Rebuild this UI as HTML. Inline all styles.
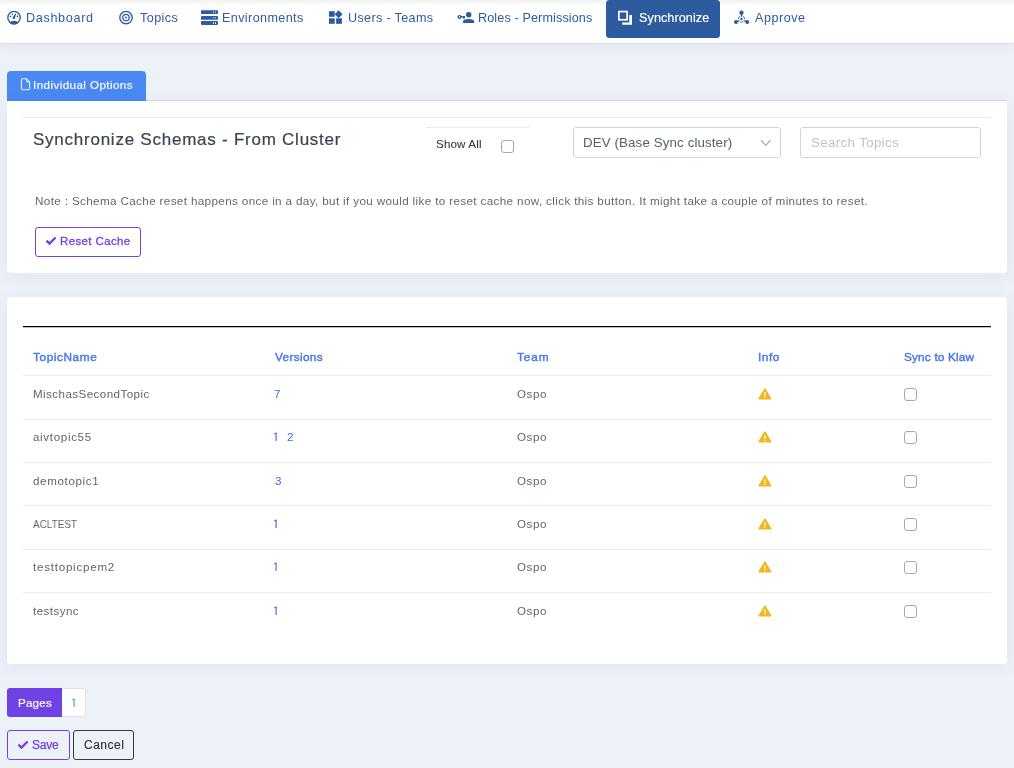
<!DOCTYPE html>
<html><head><meta charset="utf-8">
<style>
*{box-sizing:border-box;margin:0;padding:0}
html,body{width:1014px;height:768px;overflow:hidden}
body{background:#edf1f8;font-family:"Liberation Sans",sans-serif;position:relative}
.t{position:absolute;white-space:nowrap;line-height:1;font-family:"Liberation Sans",sans-serif;will-change:transform}
.abs{position:absolute}
.nav{position:absolute;left:0;top:0;width:1014px;height:43px;background:#fff;box-shadow:0 1px 2px rgba(90,100,110,.08),0 4px 14px rgba(90,100,110,.08)}
.topfade{position:absolute;left:0;top:0;width:1014px;height:6px;background:linear-gradient(#f1f1f1,#fff)}
.active{position:absolute;left:606px;top:-0.5px;width:114px;height:38px;background:#2c5b9e;border-radius:3.5px}
.tabb{position:absolute;left:7px;top:71px;width:139px;height:30px;background:#4a89f3;border-radius:4px 4px 0 0}
.card{position:absolute;background:#fff;border-radius:4px;box-shadow:0 3px 18px rgba(60,80,120,.075)}
.hl{position:absolute;height:1px;background:#ecebec}
.inp{position:absolute;border:1px solid #d4d4d4;border-radius:3px;background:#fff}
.cb{position:absolute;width:13px;height:13px;border:1px solid #a0a9b4;border-radius:3px;background:#fff}
.btn{position:absolute;border-radius:3px}
</style></head><body>
<div class="nav"></div>
<div class="topfade"></div>
<div class="active"></div>
<!-- nav icons -->
<svg class="abs" style="left:0;top:0" width="1014" height="43" viewBox="0 0 1014 43">
 <g fill="none" stroke="#2d5c9e">
  <!-- dashboard gauge -->
  <circle cx="14" cy="17.6" r="6.2" stroke-width="1.4"/>
  <!-- bullseye -->
  <circle cx="126" cy="17.6" r="6.2" stroke-width="1.4"/>
  <circle cx="126" cy="17.6" r="3.2" stroke-width="1.3"/>
 </g>
 <g fill="#2d5c9e">
  <circle cx="126" cy="17.6" r="1"/>
  <path d="M9.2 22.4 Q14 19.2 18.8 22.4 L17 24 Q14 25 11 24Z"/>
  <circle cx="10.5" cy="16.3" r="0.85"/><circle cx="17.4" cy="16.3" r="0.85"/><circle cx="12.4" cy="14.2" r="0.8"/>
  <circle cx="13.9" cy="17.7" r="1.25"/>
  <path d="M15.2 13.6 L16.1 14.1 L14.9 18 L12.8 17.4Z"/>
  <!-- server -->
  <rect x="201" y="10.2" width="17" height="3.9" rx="0.9"/>
  <rect x="201" y="15.9" width="17" height="3.9" rx="0.9"/>
  <rect x="201" y="21" width="17" height="3.9" rx="0.9"/>
  <!-- widgets -->
  <rect x="329" y="11.2" width="5.7" height="5.6"/>
  <rect x="329" y="18.3" width="5.7" height="5.5"/>
  <rect x="336.1" y="18.3" width="5.8" height="5.5"/>
  <path d="M338.6 10.3 L342.6 14.3 L338.6 18.3 L334.6 14.3Z"/>
  <!-- key user -->
  <circle cx="468.7" cy="14.8" r="2.7"/>
  <path d="M463 23 L463 21.5 Q463 19 468.6 19 Q474.2 19 474.2 21.5 L474.2 23Z"/>
  <path d="M459.5 14.9 a2.05 2.05 0 1 0 0.01 0Z M459.5 16 a0.5 0.9 0 1 1 -0.01 0Z" fill-rule="evenodd"/>
  <rect x="461" y="16.1" width="3.9" height="1.4"/>
  <path d="M463.2 16.1 L464.9 16.1 L464.9 18.3 L463.9 19 L463.2 18.5Z"/>
  <!-- hub -->
  <circle cx="741.5" cy="12.65" r="2.15"/>
  <path d="M740.5 14 L742.5 14 L741.8 16.9 L741.2 16.9Z"/>
  <circle cx="736" cy="22.1" r="2"/>
  <circle cx="747.2" cy="22.1" r="2"/>
  <circle cx="741.5" cy="19" r="1.2"/>
 </g>
 <g fill="#fff">
  <circle cx="213.4" cy="12.1" r="0.6"/><circle cx="215.5" cy="12.1" r="0.6"/>
  <circle cx="213.4" cy="17.8" r="0.6"/><circle cx="215.5" cy="17.8" r="0.6"/>
  <rect x="212.9" y="22.3" width="1" height="1.6"/><rect x="215" y="22.3" width="1" height="1.6"/>
 </g>
 <g stroke="#2d5c9e" stroke-width="1.1" fill="none">
  <path d="M739.4 20.4 L736.5 21.8 M743.6 20.4 L746.5 21.8"/>
  <circle cx="741.5" cy="19" r="3.1" stroke-width="0.9" pathLength="360" stroke-dasharray="68 52" stroke-dashoffset="64"/>
 </g>
 <!-- clone -->
 <g fill="none" stroke="#fff" stroke-width="1.7">
  <rect x="618.85" y="11.55" width="8.3" height="8.2"/>
 </g>
 <path d="M629.3 15 L632 15 L632 24.75 L622.2 24.75 L622.2 22.4 L629.3 22.4Z" fill="#fff"/>
</svg>
<div class="tabb"></div>
<svg class="abs" style="left:20px;top:77px" width="12" height="14" viewBox="0 0 12 14">
 <path d="M2.6 1.7 L6.6 1.7 L9.6 4.8 L9.6 11.9 Q9.6 12.7 8.8 12.7 L2.2 12.7 Q1.4 12.7 1.4 11.9 L1.4 2.5 Q1.4 1.7 2.2 1.7Z M6.6 1.7 L6.6 4.8 L9.6 4.8" fill="none" stroke="#fff" stroke-width="0.95" stroke-linejoin="round"/>
</svg>
<div class="card" style="left:7px;top:100.5px;width:1000px;height:172.5px"></div>
<div class="abs" style="left:146px;top:100px;width:860px;height:1px;background:#d3d7dd"></div>
<div class="hl" style="left:23px;top:117px;width:968px"></div>
<div class="hl" style="left:426px;top:127px;width:104px"></div>
<div class="cb" style="left:501px;top:140px"></div>
<div class="inp" style="left:573px;top:127px;width:208px;height:31px"></div>
<svg class="abs" style="left:758px;top:136px" width="16" height="12" viewBox="0 0 16 12"><path d="M3 4.3 L7.75 9.4 L12.5 4.3" fill="none" stroke="#a3acb8" stroke-width="1.25"/></svg>
<div class="inp" style="left:800px;top:127px;width:181px;height:31px"></div>
<div class="btn" style="left:35px;top:227px;width:106px;height:30px;border:1px solid #6e42e5"></div>
<svg class="abs" style="left:44px;top:235px" width="14" height="12" viewBox="0 0 14 12"><path d="M2.5 5.6 L5.5 8.6 L11.6 2.5" fill="none" stroke="#6e42e5" stroke-width="2.3"/></svg>
<div class="card" style="left:7px;top:297px;width:1000px;height:367px"></div>
<svg class="abs" style="left:23px;top:320px" width="968" height="12"><line x1="0" y1="6.6" x2="968" y2="6.6" stroke="#000" stroke-width="1.35"/></svg>
<div class="hl" style="left:23px;top:375px;width:968px"></div>
<div class="hl" style="left:23px;top:419px;width:968px"></div>
<div class="hl" style="left:23px;top:462px;width:968px"></div>
<div class="hl" style="left:23px;top:505px;width:968px"></div>
<div class="hl" style="left:23px;top:549px;width:968px"></div>
<div class="hl" style="left:23px;top:592px;width:968px"></div>
<svg class="abs" style="left:758px;top:388px" width="14" height="13" viewBox="0 0 14 13"><path d="M6.9 1.2 L12.6 10.7 L1.2 10.7Z" fill="#f2b71f" stroke="#f2b71f" stroke-width="1.6" stroke-linejoin="round"/><rect x="6.25" y="4.3" width="1.3" height="3.6" rx="0.5" fill="#fff"/><rect x="6.25" y="8.6" width="1.3" height="1.3" rx="0.6" fill="#fff"/></svg>
<div class="cb" style="left:904px;top:388px"></div>
<svg class="abs" style="left:758px;top:431px" width="14" height="13" viewBox="0 0 14 13"><path d="M6.9 1.2 L12.6 10.7 L1.2 10.7Z" fill="#f2b71f" stroke="#f2b71f" stroke-width="1.6" stroke-linejoin="round"/><rect x="6.25" y="4.3" width="1.3" height="3.6" rx="0.5" fill="#fff"/><rect x="6.25" y="8.6" width="1.3" height="1.3" rx="0.6" fill="#fff"/></svg>
<div class="cb" style="left:904px;top:431px"></div>
<svg class="abs" style="left:758px;top:475px" width="14" height="13" viewBox="0 0 14 13"><path d="M6.9 1.2 L12.6 10.7 L1.2 10.7Z" fill="#f2b71f" stroke="#f2b71f" stroke-width="1.6" stroke-linejoin="round"/><rect x="6.25" y="4.3" width="1.3" height="3.6" rx="0.5" fill="#fff"/><rect x="6.25" y="8.6" width="1.3" height="1.3" rx="0.6" fill="#fff"/></svg>
<div class="cb" style="left:904px;top:475px"></div>
<svg class="abs" style="left:758px;top:518px" width="14" height="13" viewBox="0 0 14 13"><path d="M6.9 1.2 L12.6 10.7 L1.2 10.7Z" fill="#f2b71f" stroke="#f2b71f" stroke-width="1.6" stroke-linejoin="round"/><rect x="6.25" y="4.3" width="1.3" height="3.6" rx="0.5" fill="#fff"/><rect x="6.25" y="8.6" width="1.3" height="1.3" rx="0.6" fill="#fff"/></svg>
<div class="cb" style="left:904px;top:518px"></div>
<svg class="abs" style="left:758px;top:561px" width="14" height="13" viewBox="0 0 14 13"><path d="M6.9 1.2 L12.6 10.7 L1.2 10.7Z" fill="#f2b71f" stroke="#f2b71f" stroke-width="1.6" stroke-linejoin="round"/><rect x="6.25" y="4.3" width="1.3" height="3.6" rx="0.5" fill="#fff"/><rect x="6.25" y="8.6" width="1.3" height="1.3" rx="0.6" fill="#fff"/></svg>
<div class="cb" style="left:904px;top:561px"></div>
<svg class="abs" style="left:758px;top:605px" width="14" height="13" viewBox="0 0 14 13"><path d="M6.9 1.2 L12.6 10.7 L1.2 10.7Z" fill="#f2b71f" stroke="#f2b71f" stroke-width="1.6" stroke-linejoin="round"/><rect x="6.25" y="4.3" width="1.3" height="3.6" rx="0.5" fill="#fff"/><rect x="6.25" y="8.6" width="1.3" height="1.3" rx="0.6" fill="#fff"/></svg>
<div class="cb" style="left:904px;top:605px"></div>
<div class="btn" style="left:7px;top:688px;width:55px;height:29px;background:#6e42e5;border-radius:3px 0 0 3px"></div>
<div class="btn" style="left:62px;top:688px;width:24px;height:29px;background:#fff;border:1px solid #dee2e6;border-left:none;border-radius:0 3px 3px 0"></div>
<div class="btn" style="left:7px;top:730px;width:63px;height:30px;border:1px solid #6e42e5"></div>
<svg class="abs" style="left:16px;top:739px" width="14" height="12" viewBox="0 0 14 12"><path d="M2.5 5.6 L5.5 8.6 L11.6 2.5" fill="none" stroke="#6e42e5" stroke-width="2.3"/></svg>
<div class="btn" style="left:73px;top:730px;width:61px;height:30px;border:1px solid #343a40"></div>
<div class="t" style="left:26.00px;top:12.00px;font-size:12.60px;letter-spacing:0.674px;color:#2d5c9e;font-weight:400;">Dashboard</div>
<div class="t" style="left:139.50px;top:12.00px;font-size:12.60px;letter-spacing:0.420px;color:#2d5c9e;font-weight:400;">Topics</div>
<div class="t" style="left:222.00px;top:12.00px;font-size:12.60px;letter-spacing:0.391px;color:#2d5c9e;font-weight:400;">Environments</div>
<div class="t" style="left:348.00px;top:12.00px;font-size:12.60px;letter-spacing:0.344px;color:#2d5c9e;font-weight:400;">Users - Teams</div>
<div class="t" style="left:478.40px;top:12.00px;font-size:12.60px;letter-spacing:0.129px;color:#2d5c9e;font-weight:400;">Roles - Permissions</div>
<div class="t" style="left:638.70px;top:12.00px;font-size:12.60px;letter-spacing:0.090px;color:#ffffff;font-weight:400;-webkit-text-stroke:0.15px #fff;">Synchronize</div>
<div class="t" style="left:755.00px;top:12.00px;font-size:12.60px;letter-spacing:0.516px;color:#2d5c9e;font-weight:400;">Approve</div>
<div class="t" style="left:33.30px;top:79.00px;font-size:11.60px;letter-spacing:0.432px;color:#ffffff;font-weight:400;-webkit-text-stroke:0.15px #fff;">Individual Options</div>
<div class="t" style="left:33.20px;top:131.00px;font-size:17.00px;letter-spacing:0.757px;color:#3a4651;font-weight:400;-webkit-text-stroke:0.22px #3a4651;">Synchronize Schemas - From Cluster</div>
<div class="t" style="left:435.70px;top:138.00px;font-size:11.60px;letter-spacing:0.153px;color:#343a40;font-weight:400;-webkit-text-stroke:0.1px #343a40;">Show All</div>
<div class="t" style="left:583.00px;top:136.00px;font-size:13.30px;letter-spacing:0.128px;color:#56606a;font-weight:400;">DEV (Base Sync cluster)</div>
<div class="t" style="left:810.70px;top:136.00px;font-size:13.30px;letter-spacing:0.370px;color:#c2c2c2;font-weight:400;">Search Topics</div>
<div class="t" style="left:35.30px;top:195.00px;font-size:11.70px;letter-spacing:0.350px;color:#62696f;font-weight:400;">Note : Schema Cache reset happens once in a day, but if you would like to reset cache now, click this button. It might take a couple of minutes to reset.</div>
<div class="t" style="left:60.20px;top:236.00px;font-size:11.50px;letter-spacing:0.372px;color:#6e42e5;font-weight:400;-webkit-text-stroke:0.3px #6e42e5;">Reset Cache</div>
<div class="t" style="left:33.00px;top:352.00px;font-size:11.80px;letter-spacing:0.594px;color:#4a7ae4;font-weight:400;-webkit-text-stroke:0.45px #4a7ae4;">TopicName</div>
<div class="t" style="left:275.00px;top:352.00px;font-size:11.80px;letter-spacing:0.336px;color:#4a7ae4;font-weight:400;-webkit-text-stroke:0.45px #4a7ae4;">Versions</div>
<div class="t" style="left:517.00px;top:352.00px;font-size:11.80px;letter-spacing:0.910px;color:#4a7ae4;font-weight:400;-webkit-text-stroke:0.45px #4a7ae4;">Team</div>
<div class="t" style="left:757.50px;top:352.00px;font-size:11.80px;letter-spacing:0.528px;color:#4a7ae4;font-weight:400;-webkit-text-stroke:0.45px #4a7ae4;">Info</div>
<div class="t" style="left:904.00px;top:352.00px;font-size:11.80px;letter-spacing:0.175px;color:#4a7ae4;font-weight:400;-webkit-text-stroke:0.45px #4a7ae4;">Sync to Klaw</div>
<div class="t" style="left:17.50px;top:697.00px;font-size:11.60px;letter-spacing:0.206px;color:#ffffff;font-weight:400;-webkit-text-stroke:0.2px #fff;">Pages</div>
<div class="t" style="left:32.00px;top:739.00px;font-size:12.00px;letter-spacing:-0.193px;color:#6e42e5;font-weight:400;-webkit-text-stroke:0.25px #6e42e5;">Save</div>
<div class="t" style="left:83.80px;top:739.00px;font-size:12.00px;letter-spacing:0.503px;color:#343a40;font-weight:400;-webkit-text-stroke:0.2px #343a40;">Cancel</div>
<div class="t" style="left:32.80px;top:388.00px;font-size:11.60px;letter-spacing:0.435px;color:#5f666e;font-weight:400;">MischasSecondTopic</div>
<div class="t" style="left:516.70px;top:388.00px;font-size:11.60px;letter-spacing:0.546px;color:#5f666e;font-weight:400;">Ospo</div>
<div class="t" style="left:32.80px;top:431.00px;font-size:11.60px;letter-spacing:0.660px;color:#5f666e;font-weight:400;">aivtopic55</div>
<div class="t" style="left:516.70px;top:431.00px;font-size:11.60px;letter-spacing:0.546px;color:#5f666e;font-weight:400;">Ospo</div>
<div class="t" style="left:32.80px;top:475.00px;font-size:11.60px;letter-spacing:0.634px;color:#5f666e;font-weight:400;">demotopic1</div>
<div class="t" style="left:516.70px;top:475.00px;font-size:11.60px;letter-spacing:0.546px;color:#5f666e;font-weight:400;">Ospo</div>
<div class="t" style="left:32.80px;top:518.00px;font-size:11.60px;letter-spacing:0.000px;color:#5f666e;font-weight:400;transform:scaleX(0.8567);transform-origin:0.00px 0;">ACLTEST</div>
<div class="t" style="left:516.70px;top:518.00px;font-size:11.60px;letter-spacing:0.546px;color:#5f666e;font-weight:400;">Ospo</div>
<div class="t" style="left:32.80px;top:561.00px;font-size:11.60px;letter-spacing:0.756px;color:#5f666e;font-weight:400;">testtopicpem2</div>
<div class="t" style="left:516.70px;top:561.00px;font-size:11.60px;letter-spacing:0.546px;color:#5f666e;font-weight:400;">Ospo</div>
<div class="t" style="left:32.80px;top:605.00px;font-size:11.60px;letter-spacing:0.439px;color:#5f666e;font-weight:400;">testsync</div>
<div class="t" style="left:516.70px;top:605.00px;font-size:11.60px;letter-spacing:0.546px;color:#5f666e;font-weight:400;">Ospo</div>
<div class="t" style="left:274.40px;top:388.00px;font-size:11.60px;letter-spacing:0.000px;color:#3c6fd8;font-weight:400;">7</div>
<div class="t" style="left:287.20px;top:431.00px;font-size:11.60px;letter-spacing:0.000px;color:#3c6fd8;font-weight:400;">2</div>
<div class="t" style="left:275.00px;top:475.00px;font-size:11.60px;letter-spacing:0.000px;color:#3c6fd8;font-weight:400;">3</div>
<svg class="abs" style="left:72.0px;top:698px" width="5" height="10" viewBox="0 0 5 10"><path d="M0.3 1.9 L2.1 0.9 M2.1 0.6 L2.1 9" fill="none" stroke="#3aaec8" stroke-width="1.15"/></svg>
<svg class="abs" style="left:274.3px;top:432px" width="5" height="10" viewBox="0 0 5 10"><path d="M0.3 1.9 L2.1 0.9 M2.1 0.6 L2.1 9" fill="none" stroke="#3c6fd8" stroke-width="1.15"/></svg>
<svg class="abs" style="left:274.3px;top:519px" width="5" height="10" viewBox="0 0 5 10"><path d="M0.3 1.9 L2.1 0.9 M2.1 0.6 L2.1 9" fill="none" stroke="#3c6fd8" stroke-width="1.15"/></svg>
<svg class="abs" style="left:274.3px;top:562px" width="5" height="10" viewBox="0 0 5 10"><path d="M0.3 1.9 L2.1 0.9 M2.1 0.6 L2.1 9" fill="none" stroke="#3c6fd8" stroke-width="1.15"/></svg>
<svg class="abs" style="left:274.3px;top:606px" width="5" height="10" viewBox="0 0 5 10"><path d="M0.3 1.9 L2.1 0.9 M2.1 0.6 L2.1 9" fill="none" stroke="#3c6fd8" stroke-width="1.15"/></svg>
</body></html>
